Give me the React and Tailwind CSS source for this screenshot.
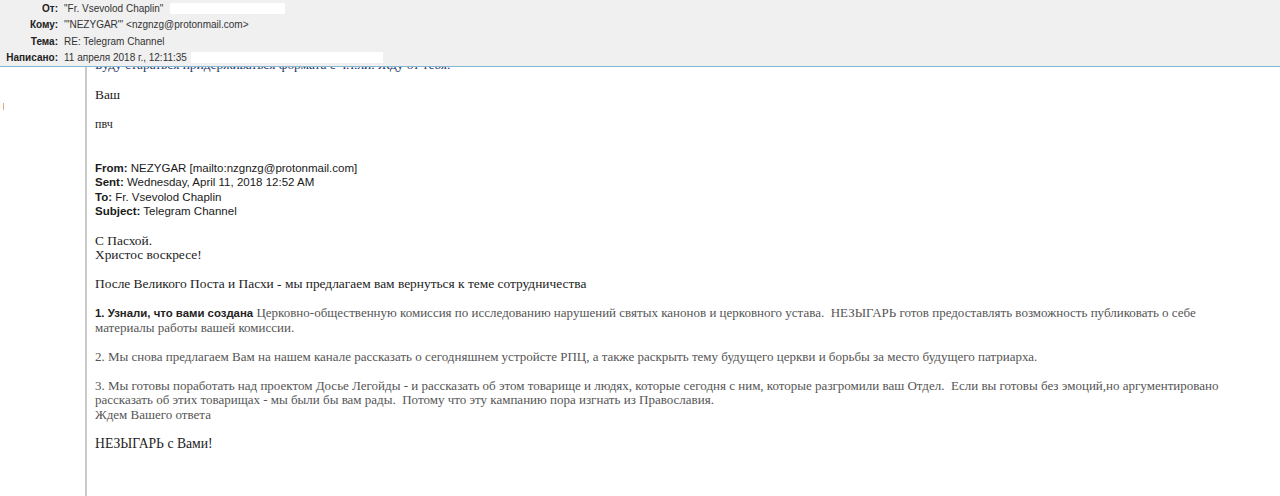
export default function App() {
  const headerFont = { fontFamily: '"Liberation Sans", Arial, sans-serif' };

  return (
    <div className="w-[1280px] h-[496px] bg-white flex flex-col overflow-hidden" style={headerFont}>
      {/* Шапка письма */}
      <div className="h-[67px] bg-[#f0f0f0] border-b border-[#86b6d3] text-[10px] text-[#333]">
        <div className="flex items-center h-[16.5px]">
          <span className="w-[58px] text-right font-bold text-[#222]">От:</span>
          <span className="ml-[6px]">"Fr. Vsevolod Chaplin"</span>
          <span className="ml-[7px] w-[115px] h-[11px] bg-white" />
        </div>
        <div className="flex items-center h-[16.5px]">
          <span className="w-[58px] text-right font-bold text-[#222]">Кому:</span>
          <span className="ml-[6px]">'"NEZYGAR"' &lt;nzgnzg@protonmail.com&gt;</span>
        </div>
        <div className="flex items-center h-[16.5px]">
          <span className="w-[58px] text-right font-bold text-[#222]">Тема:</span>
          <span className="ml-[6px]">RE: Telegram Channel</span>
        </div>
        <div className="flex items-center h-[16.5px]">
          <span className="w-[58px] text-right font-bold text-[#222]">Написано:</span>
          <span className="ml-[6px]">11 апреля 2018 г., 12:11:35</span>
          <span className="ml-[4px] w-[192px] h-[11px] bg-white" />
        </div>
      </div>

      {/* Тело письма */}
      <div className="flex-1 flex overflow-hidden">
        <div className="w-[87px] shrink-0 border-r-2 border-[#c9c9c9]">
          <div className="ml-[3px] mt-[36px] w-px h-[7px] bg-[#e0b070]" />
        </div>
        <div
          className="pl-[8px] text-[13.4px] leading-[14.5px] text-[#222] whitespace-pre"
          style={{ fontFamily: '"Liberation Serif", "Times New Roman", serif' }}
        >
          <div className="-mt-[9px] text-[#1f3864]">Буду стараться придерживаться формата с ч.т.ли. Жду от тебя.</div>
          <div className="mt-[15px]">Ваш</div>
          <div className="mt-[15px] text-[12px]">пвч</div>

          <div className="mt-[29px] text-[11.5px] text-[#1a1a1a]" style={headerFont}>
            <div><b>From:</b> NEZYGAR [mailto:nzgnzg@protonmail.com]</div>
            <div><b>Sent:</b> Wednesday, April 11, 2018 12:52 AM</div>
            <div><b>To:</b> Fr. Vsevolod Chaplin</div>
            <div><b>Subject:</b> Telegram Channel</div>
          </div>

          <div className="mt-[15px]">
            <div>С Пасхой.</div>
            <div>Христос воскресе!</div>
          </div>

          <div className="mt-[14.5px]">После Великого Поста и Пасхи - мы предлагаем вам вернуться к теме сотрудничества</div>

          <div className="mt-[14.5px] text-[13px] text-[#555]">
            <div>
              <b className="text-[11.4px] text-[#222]" style={headerFont}>1. Узнали, что вами создана</b>{' '}
              Церковно-общественную комиссия по исследованию нарушений святых канонов и церковного устава.  НЕЗЫГАРЬ готов предоставлять возможность публиковать о себе
            </div>
            <div>материалы работы вашей комиссии.</div>
          </div>

          <div className="mt-[14.5px] text-[13px] text-[#555]">
            2. Мы снова предлагаем Вам на нашем канале рассказать о сегодняшнем устройсте РПЦ, а также раскрыть тему будущего церкви и борьбы за место будущего патриарха.
          </div>

          <div className="mt-[14.5px] text-[13px] text-[#555]">
            <div>3. Мы готовы поработать над проектом Досье Легойды - и рассказать об этом товарище и людях, которые сегодня с ним, которые разгромили ваш Отдел.  Если вы готовы без эмоций,но аргументировано</div>
            <div>рассказать об этих товарищах - мы были бы вам рады.  Потому что эту кампанию пора изгнать из Православия.</div>
            <div>Ждем Вашего ответа</div>
          </div>

          <div className="mt-[14.5px] text-[13.7px]">НЕЗЫГАРЬ с Вами!</div>
        </div>
      </div>
    </div>
  );
}
